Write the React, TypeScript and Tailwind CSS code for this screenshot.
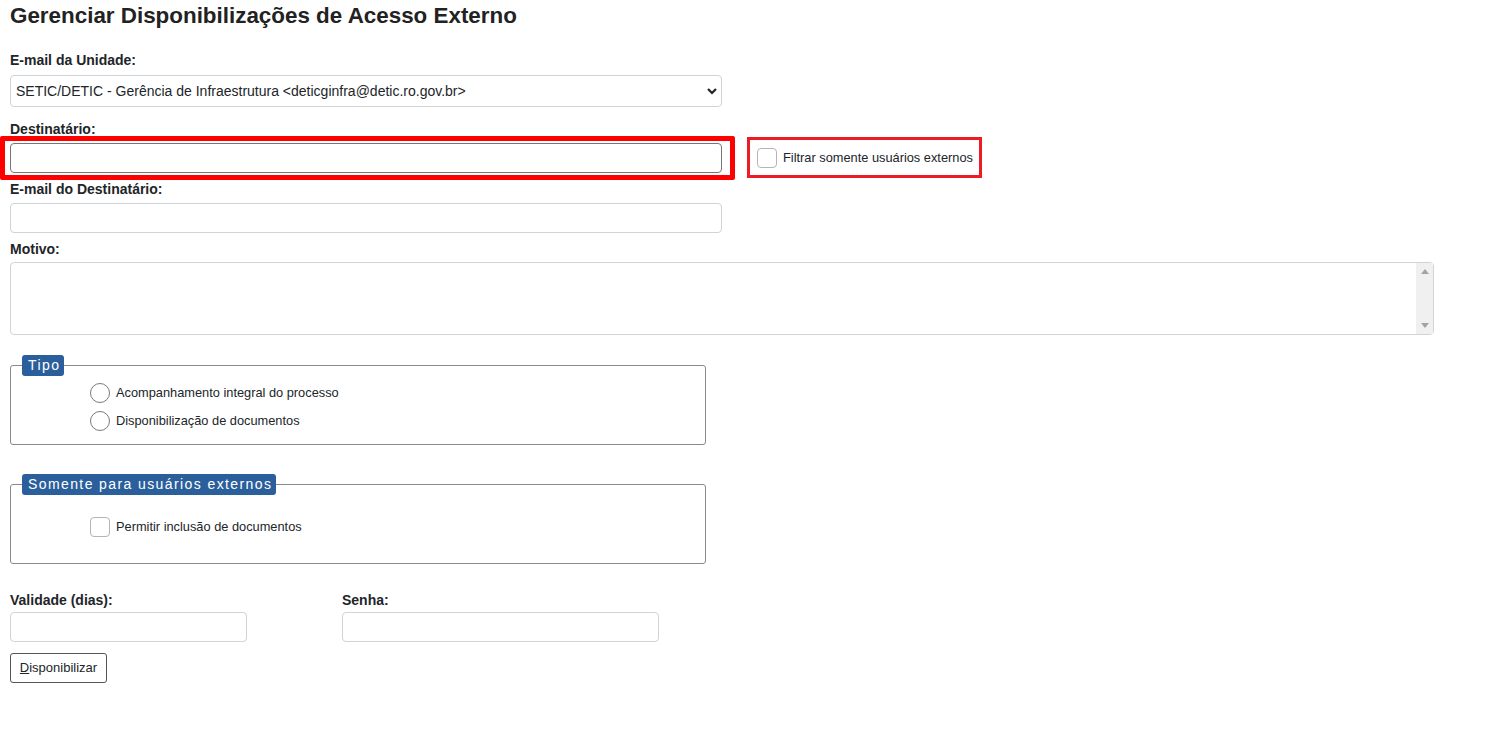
import { useState } from 'react'

const font = { fontFamily: '"Liberation Sans", Arial, sans-serif' }

function Label({ children, className = '' }: { children: React.ReactNode; className?: string }) {
  return <div className={`text-[14px] leading-4 font-bold text-[#212529] ${className}`}>{children}</div>
}

function Check({ checked, onChange }: { checked: boolean; onChange: (v: boolean) => void }) {
  return (
    <input
      type="checkbox"
      checked={checked}
      onChange={(e) => onChange(e.target.checked)}
      className="appearance-none w-5 h-5 shrink-0 rounded-[4px] border border-[#b5b5b5] bg-white checked:bg-[#2b5f9c] checked:border-[#2b5f9c]"
    />
  )
}

export default function App() {
  const [filtrar, setFiltrar] = useState(false)
  const [permitir, setPermitir] = useState(false)
  const [tipo, setTipo] = useState('')

  return (
    <div style={font} className="min-h-screen bg-white pl-[10px] pt-[4px] text-[#212529]">
      <h1 className="text-[22.4px] leading-6 font-bold text-[#222]">
        Gerenciar Disponibilizações de Acesso Externo
      </h1>

      {/* E-mail da Unidade */}
      <Label className="mt-[24px]">E-mail da Unidade:</Label>
      <div className="relative mt-[7px] w-[712px]">
        <select className="appearance-none w-full h-[32px] pl-[5px] pr-8 text-[14px] text-[#212529] bg-white border border-[#ced4da] rounded-[4px] outline-none">
          <option>SETIC/DETIC - Gerência de Infraestrutura &lt;deticginfra@detic.ro.gov.br&gt;</option>
        </select>
        <svg
          className="absolute right-[5px] top-[12px] pointer-events-none"
          width="10"
          height="8"
          viewBox="0 0 10 8"
        >
          <path d="M1 2 L5 6 L9 2" fill="none" stroke="#222" strokeWidth="2.2" />
        </svg>
      </div>

      {/* Destinatário */}
      <Label className="mt-[14px]">Destinatário:</Label>
      <div className="relative mt-0 flex items-center">
        <input
          type="text"
          className="w-[712px] h-[30px] px-2 text-[14px] bg-white border border-[#767676] rounded-[4px] outline-none"
        />
        <div className="absolute left-[-10px] top-[-1px] w-[735px] h-[44px] border-[5px] border-[#ff0000] rounded-[2px] pointer-events-none" />
        <label className="ml-[25px] flex items-center h-[41px] w-[235px] border-[3px] border-[#ed1c24] pl-[7px] gap-[6px] cursor-pointer">
          <Check checked={filtrar} onChange={setFiltrar} />
          <span className="text-[12.8px] text-[#212529]">Filtrar somente usuários externos</span>
        </label>
      </div>

      {/* E-mail do Destinatário */}
      <Label className="mt-[3px]">E-mail do Destinatário:</Label>
      <input
        type="text"
        className="block mt-[6px] w-[712px] h-[30px] px-2 text-[14px] bg-white border border-[#ced4da] rounded-[4px] outline-none"
      />

      {/* Motivo */}
      <Label className="mt-[8px]">Motivo:</Label>
      <div className="relative mt-[5px] w-[1424px] h-[73px]">
        <textarea className="block w-full h-full p-1 pr-[20px] text-[14px] bg-white border border-[#ced4da] rounded-[4px] outline-none resize-none" />
        <div className="absolute right-[1px] top-[1px] bottom-[1px] w-[17px] bg-[#f0f0f0] flex flex-col items-center justify-between py-[6px] pointer-events-none">
          <svg width="8" height="5" viewBox="0 0 8 5">
            <path d="M0 5 L4 0 L8 5 Z" fill="#a3a3a3" />
          </svg>
          <svg width="8" height="5" viewBox="0 0 8 5">
            <path d="M0 0 L8 0 L4 5 Z" fill="#a3a3a3" />
          </svg>
        </div>
      </div>

      {/* Tipo */}
      <fieldset className="mt-[20px] w-[696px] h-[90px] border border-[#8a8a8a] rounded-[3px] pl-[79px]">
        <legend className="ml-[-68px] pl-[6px] pr-[4px] h-[21px] leading-[21px] text-[14px] text-white bg-[#2b5f9c] rounded-[3px] tracking-[1.4px]">
          Tipo
        </legend>
        <div className="flex flex-col gap-[8px] mt-[7px]">
          {['Acompanhamento integral do processo', 'Disponibilização de documentos'].map((t) => (
            <label key={t} className="flex items-center gap-[6px] cursor-pointer">
              <input
                type="radio"
                name="tipo"
                checked={tipo === t}
                onChange={() => setTipo(t)}
                className="appearance-none w-5 h-5 rounded-full border border-[#7a7a7a] bg-white checked:border-[6px] checked:border-[#2b5f9c]"
              />
              <span className="text-[12.8px] text-[#212529]">{t}</span>
            </label>
          ))}
        </div>
      </fieldset>

      {/* Somente para usuários externos */}
      <fieldset className="mt-[29px] w-[696px] h-[90px] border border-[#8a8a8a] rounded-[3px] pl-[79px]">
        <legend className="ml-[-68px] pl-[6px] pr-[4px] h-[21px] leading-[21px] text-[14px] text-white bg-[#2b5f9c] rounded-[3px] tracking-[1.4px]">
          Somente para usuários externos
        </legend>
        <label className="flex items-center gap-[6px] mt-[22px] cursor-pointer">
          <Check checked={permitir} onChange={setPermitir} />
          <span className="text-[12.8px] text-[#212529]">Permitir inclusão de documentos</span>
        </label>
      </fieldset>

      {/* Validade / Senha */}
      <div className="mt-[28px] flex gap-[95px]">
        <div>
          <Label>Validade (dias):</Label>
          <input
            type="text"
            className="block mt-[4px] w-[237px] h-[30px] px-2 text-[14px] bg-white border border-[#ced4da] rounded-[4px] outline-none"
          />
        </div>
        <div>
          <Label>Senha:</Label>
          <input
            type="password"
            className="block mt-[4px] w-[317px] h-[30px] px-2 text-[14px] bg-white border border-[#ced4da] rounded-[4px] outline-none"
          />
        </div>
      </div>

      <button
        type="button"
        className="mt-[11px] h-[30px] w-[97px] text-[13px] text-[#212529] bg-white border border-[#555] rounded-[3px]"
      >
        <span className="underline">D</span>isponibilizar
      </button>
    </div>
  )
}
